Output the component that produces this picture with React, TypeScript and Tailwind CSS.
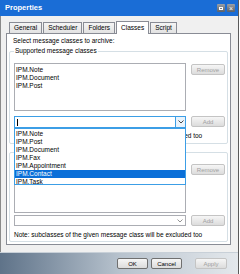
import React from "react";

const font = { fontFamily: '"Liberation Sans", Arial, sans-serif' };

const Btn = ({ label, disabled, className = "" }: { label: string; disabled?: boolean; className?: string }) => (
  <div
    className={`h-[11px] flex items-center justify-center border rounded-[2px] text-[6px] leading-none bg-gradient-to-b from-[#f6f6f6] to-[#dcdcdc] ${
      disabled ? "border-[#c4c4c4] text-[#a0a0a0]" : "border-[#707070] text-black"
    } ${className}`}
  >
    {label}
  </div>
);

const Chevron = ({ color = "#555" }: { color?: string }) => (
  <svg width="6" height="4" viewBox="0 0 6 4">
    <path d="M0.5 0.5 L3 3 L5.5 0.5" fill="none" stroke={color} strokeWidth="0.9" />
  </svg>
);

export default function App() {
  const dropItems = ["IPM.Note", "IPM.Post", "IPM.Document", "IPM.Fax", "IPM.Appointment", "IPM.Contact", "IPM.Task"];

  return (
    <div className="w-[240px] h-[274px] bg-white overflow-hidden text-black" style={font}>
      <div className="w-[239px] h-[274px] flex flex-col border-r border-[#5a5a5a]">
        {/* title bar */}
        <div className="h-[16px] bg-[#1a6dd6] flex items-center justify-between pl-[5px] pr-[3px]">
          <span className="text-white font-bold text-[7.5px] leading-none">Properties</span>
          <div className="flex gap-[2px]">
            <div className="w-[8px] h-[8px] rounded-[1px] bg-gradient-to-b from-[#9aa0a8] to-[#5c6168] flex items-center justify-center">
              <div className="w-[4px] h-[3px] border border-white" />
            </div>
            <div className="w-[8px] h-[8px] rounded-[1px] bg-gradient-to-b from-[#9aa0a8] to-[#5c6168] flex items-center justify-center text-white text-[7px] leading-none">
              ×
            </div>
          </div>
        </div>

        {/* body */}
        <div className="flex-1 bg-[#f0f0f0] border-l border-[#8a8a8a] pl-[5px] pr-[7px] pt-[4px] flex flex-col">
          {/* tabs */}
          <div className="flex items-end h-[13px] pl-[3px]">
            {["General", "Scheduler", "Folders"].map((t) => (
              <div
                key={t}
                className="h-[11px] px-[4px] mr-[1px] border border-b-0 border-[#898c95] bg-gradient-to-b from-[#f4f4f4] to-[#e2e2e2] text-[6.5px] leading-none flex items-center"
              >
                {t}
              </div>
            ))}
            <div className="h-[13px] px-[4px] mr-[1px] -mb-[1px] border border-b-0 border-[#898c95] bg-white text-[6.5px] leading-none flex items-center z-10">
              Classes
            </div>
            <div className="h-[11px] px-[4px] border border-b-0 border-[#898c95] bg-gradient-to-b from-[#f4f4f4] to-[#e2e2e2] text-[6.5px] leading-none flex items-center">
              Script
            </div>
          </div>

          {/* panel */}
          <div className="h-[212px] bg-white border border-[#898c95] px-[2px] pt-[3px] text-[6.5px] leading-none">
            <div className="pl-[4px] h-[8px] flex items-center">Select message classes to archive:</div>

            {/* group 1 */}
            <div className="relative mt-[6px] mx-[0px] border border-[#d5dfe5] rounded-[2px] h-[93px] pl-[4px] pr-[2px] pt-[11px]">
              <span className="absolute -top-[4px] left-[4px] bg-white px-[1px]">Supported message classes</span>
              <div className="flex gap-[5px]">
                <div className="w-[172px] h-[48px] border border-[#abadb3] pl-[1px] pt-[2px] flex flex-col gap-[0px]">
                  <div className="h-[8px] flex items-center">IPM.Note</div>
                  <div className="h-[8px] flex items-center">IPM.Document</div>
                  <div className="h-[8px] flex items-center">IPM.Post</div>
                </div>
                <Btn label="Remove" disabled className="w-[34px] mt-[1px]" />
              </div>
              <div className="flex gap-[5px] mt-[5px]">
                <div className="relative w-[172px] h-[12px] border border-[#3c9ee6] flex items-center">
                  <div className="ml-[2px] w-[1px] h-[7px] bg-black" />
                  <div className="ml-auto w-[10px] h-full border-l border-[#3c9ee6] bg-[#e8f3fc] flex items-center justify-center">
                    <Chevron color="#333" />
                  </div>
                  {/* open dropdown */}
                  <div className="absolute left-[-1px] top-[11px] w-[172px] h-[57px] bg-white border border-[#3c9ee6] z-20 pt-[1px]">
                    {dropItems.map((it) => (
                      <div
                        key={it}
                        className={`h-[8px] pl-[1px] flex items-center ${
                          it === "IPM.Contact" ? "bg-[#0a6fd8] text-white" : ""
                        }`}
                      >
                        {it}
                      </div>
                    ))}
                  </div>
                </div>
                <Btn label="Add" disabled className="w-[34px]" />
              </div>
              <div className="mt-[4px] h-[8px] flex items-center">
                Note: subclasses of the given message class will be excluded too
              </div>
            </div>

            {/* group 2 */}
            <div className="relative mt-[8px] border border-[#d5dfe5] rounded-[2px] h-[90px] pl-[4px] pr-[2px] pt-[7px]">
              <div className="flex gap-[5px]">
                <div className="w-[172px] h-[53px] border border-[#abadb3]" />
                <Btn label="Remove" disabled className="w-[34px] mt-[4px]" />
              </div>
              <div className="flex gap-[5px] mt-[2px]">
                <div className="w-[172px] h-[11px] border border-[#abadb3] flex items-center">
                  <div className="ml-auto w-[10px] h-full flex items-center justify-center">
                    <Chevron color="#888" />
                  </div>
                </div>
                <Btn label="Add" disabled className="w-[34px]" />
              </div>
              <div className="mt-[5px] h-[8px] flex items-center">
                Note: subclasses of the given message class will be excluded too
              </div>
            </div>
          </div>
          <div className="flex-1" />
        </div>

        {/* bottom bar */}
        <div className="h-[22px] bg-gradient-to-r from-[#5f7389] via-[#b7c2cd] to-[#e4e8ec] flex items-center justify-end pr-[11px] gap-[3px] border-t border-[#c8d0d8]">
          <Btn label="OK" className="w-[31px]" />
          <Btn label="Cancel" className="w-[31px]" />
          <Btn label="Apply" disabled className="w-[32px] ml-[10px]" />
        </div>
      </div>
    </div>
  );
}
